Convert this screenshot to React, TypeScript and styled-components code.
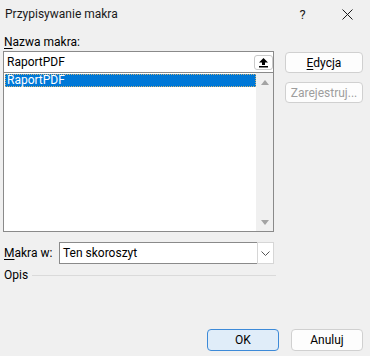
import React from "react";
import styled, { createGlobalStyle } from "styled-components";

const Global = createGlobalStyle`
  html, body { margin: 0; padding: 0; background: #f0f0f0; }
  * { box-sizing: border-box; }
`;

const Window = styled.div`
  width: 370px;
  height: 356px;
  background: #f0f0f0;
  font-family: Roboto, "Noto Sans", sans-serif;
  font-size: 12px;
  color: #000;
  display: flex;
  flex-direction: column;
  overflow: hidden;
`;

const TitleBar = styled.div`
  height: 28px;
  display: flex;
  align-items: center;
  padding-left: 5px;
`;

const Title = styled.div`
  flex: 1;
  font-size: 12px;
  color: #1a1a1a;
`;

const TitleButton = styled.div`
  width: 45px;
  height: 28px;
  display: flex;
  align-items: center;
  justify-content: center;
  font-size: 13px;
  color: #1a1a1a;
`;

const Body = styled.div`
  display: flex;
  gap: 11px;
  padding: 6px 0 0 3px;
`;

const LeftCol = styled.div`
  width: 271px;
  display: flex;
  flex-direction: column;
`;

const RightCol = styled.div`
  width: 78px;
  display: flex;
  flex-direction: column;
  gap: 9px;
  padding-top: 18px;
`;

const Label = styled.div`
  height: 16px;
  line-height: 16px;
  padding-left: 1px;
  margin-bottom: 1px;
`;

const U = styled.span`
  text-decoration: underline;
  text-underline-offset: 2px;
`;

const InputBox = styled.div`
  height: 22px;
  border: 1px solid #8a8a8a;
  background: #fff;
  display: flex;
  align-items: center;
  padding: 0 0 0 3px;
`;

const InputText = styled.div`
  flex: 1;
`;

const UploadButton = styled.div`
  width: 19px;
  height: 15px;
  border: 1px solid #c9c9c9;
  border-radius: 3px;
  background: #fff;
  display: flex;
  align-items: center;
  justify-content: center;
`;

const ListBox = styled.div`
  height: 160px;
  margin-top: -1px;
  border: 1px solid #8a8a8a;
  background: #fff;
  display: flex;
  padding: 1px 0 1px 1px;
`;

const ListItems = styled.div`
  flex: 1;
`;

const ListItem = styled.div<{ $selected?: boolean }>`
  height: 13px;
  line-height: 11px;
  padding-left: 1px;
  background: ${(p) => (p.$selected ? "#0078d7" : "transparent")};
  color: ${(p) => (p.$selected ? "#fff" : "#000")};
  border: 1px dotted ${(p) => (p.$selected ? "#c8b27a" : "transparent")};
`;

const ScrollBar = styled.div`
  width: 17px;
  margin: -1px 0 -1px 0;
  background: #f0f0f0;
  display: flex;
  flex-direction: column;
  justify-content: space-between;
  align-items: center;
  padding: 7px 0 6px;
`;

const Row = styled.div`
  display: flex;
  align-items: center;
  margin-top: 10px;
  height: 22px;
`;

const RowLabel = styled.div`
  width: 56px;
  padding-left: 1px;
`;

const Combo = styled.div`
  flex: 1;
  height: 22px;
  border: 1px solid #8a8a8a;
  background: #fff;
  display: flex;
  align-items: stretch;
  padding-left: 3px;
`;

const ComboText = styled.div`
  flex: 1;
  display: flex;
  align-items: center;
`;

const ComboButton = styled.div`
  width: 17px;
  border: 1px solid #d6d6d6;
  display: flex;
  align-items: center;
  justify-content: center;
  margin: -1px -1px -1px 0;
`;

const OpisRow = styled.div`
  display: flex;
  align-items: center;
  height: 18px;
  margin-top: 2px;
  width: 273px;
`;

const OpisLabel = styled.div`
  padding-left: 1px;
`;

const Rule = styled.div`
  flex: 1;
  height: 1px;
  background: #dadada;
  margin-left: 4px;
`;

const Button = styled.div<{ $primary?: boolean; $disabled?: boolean }>`
  height: 21px;
  border: 1px solid ${(p) => (p.$primary ? "#3d8ad8" : "#d0d0d0")};
  border-radius: 4px;
  background: ${(p) => (p.$primary ? "#e0edf9" : "#fdfdfd")};
  color: ${(p) => (p.$disabled ? "#9d9d9d" : "#000")};
  display: flex;
  align-items: center;
  justify-content: center;
`;

const Footer = styled.div`
  margin-top: auto;
  display: flex;
  justify-content: flex-end;
  gap: 12px;
  padding: 0 7px 5px 0;
`;

const FooterButton = styled(Button)`
  width: 72px;
  height: 22px;
`;

const UpArrowIcon = () => (
  <svg width="11" height="11" viewBox="0 0 11 11">
    <path d="M5.5 1 L10 5.5 L7 5.5 L7 8 L4 8 L4 5.5 L1 5.5 Z" fill="#000" />
    <rect x="1" y="9" width="9" height="1.5" fill="#000" />
  </svg>
);

const Tri = ({ up }: { up?: boolean }) => (
  <svg width="8" height="5" viewBox="0 0 8 5">
    <path d={up ? "M0 5 L4 0 L8 5 Z" : "M0 0 L8 0 L4 5 Z"} fill="#a3a3a3" />
  </svg>
);

const Chevron = () => (
  <svg width="9" height="5" viewBox="0 0 9 5">
    <path d="M0.5 0.5 L4.5 4.5 L8.5 0.5" fill="none" stroke="#555" strokeWidth="1" />
  </svg>
);

const CloseIcon = () => (
  <svg width="11" height="11" viewBox="0 0 11 11">
    <path d="M0.5 0.5 L10.5 10.5 M10.5 0.5 L0.5 10.5" stroke="#1a1a1a" strokeWidth="1" />
  </svg>
);

export default function App() {
  return (
    <Window>
      <Global />
      <TitleBar>
        <Title>Przypisywanie makra</Title>
        <TitleButton>?</TitleButton>
        <TitleButton>
          <CloseIcon />
        </TitleButton>
      </TitleBar>
      <Body>
        <LeftCol>
          <Label>
            <U>N</U>azwa makra:
          </Label>
          <InputBox>
            <InputText>RaportPDF</InputText>
            <UploadButton>
              <UpArrowIcon />
            </UploadButton>
          </InputBox>
          <ListBox>
            <ListItems>
              <ListItem $selected>RaportPDF</ListItem>
            </ListItems>
            <ScrollBar>
              <Tri up />
              <Tri />
            </ScrollBar>
          </ListBox>
          <Row>
            <RowLabel>
              <U>M</U>akra w:
            </RowLabel>
            <Combo>
              <ComboText>Ten skoroszyt</ComboText>
              <ComboButton>
                <Chevron />
              </ComboButton>
            </Combo>
          </Row>
          <OpisRow>
            <OpisLabel>Opis</OpisLabel>
            <Rule />
          </OpisRow>
        </LeftCol>
        <RightCol>
          <Button>
            <span>
              <U>E</U>dycja
            </span>
          </Button>
          <Button $disabled>Zarejestruj...</Button>
        </RightCol>
      </Body>
      <Footer>
        <FooterButton $primary>OK</FooterButton>
        <FooterButton>Anuluj</FooterButton>
      </Footer>
    </Window>
  );
}
